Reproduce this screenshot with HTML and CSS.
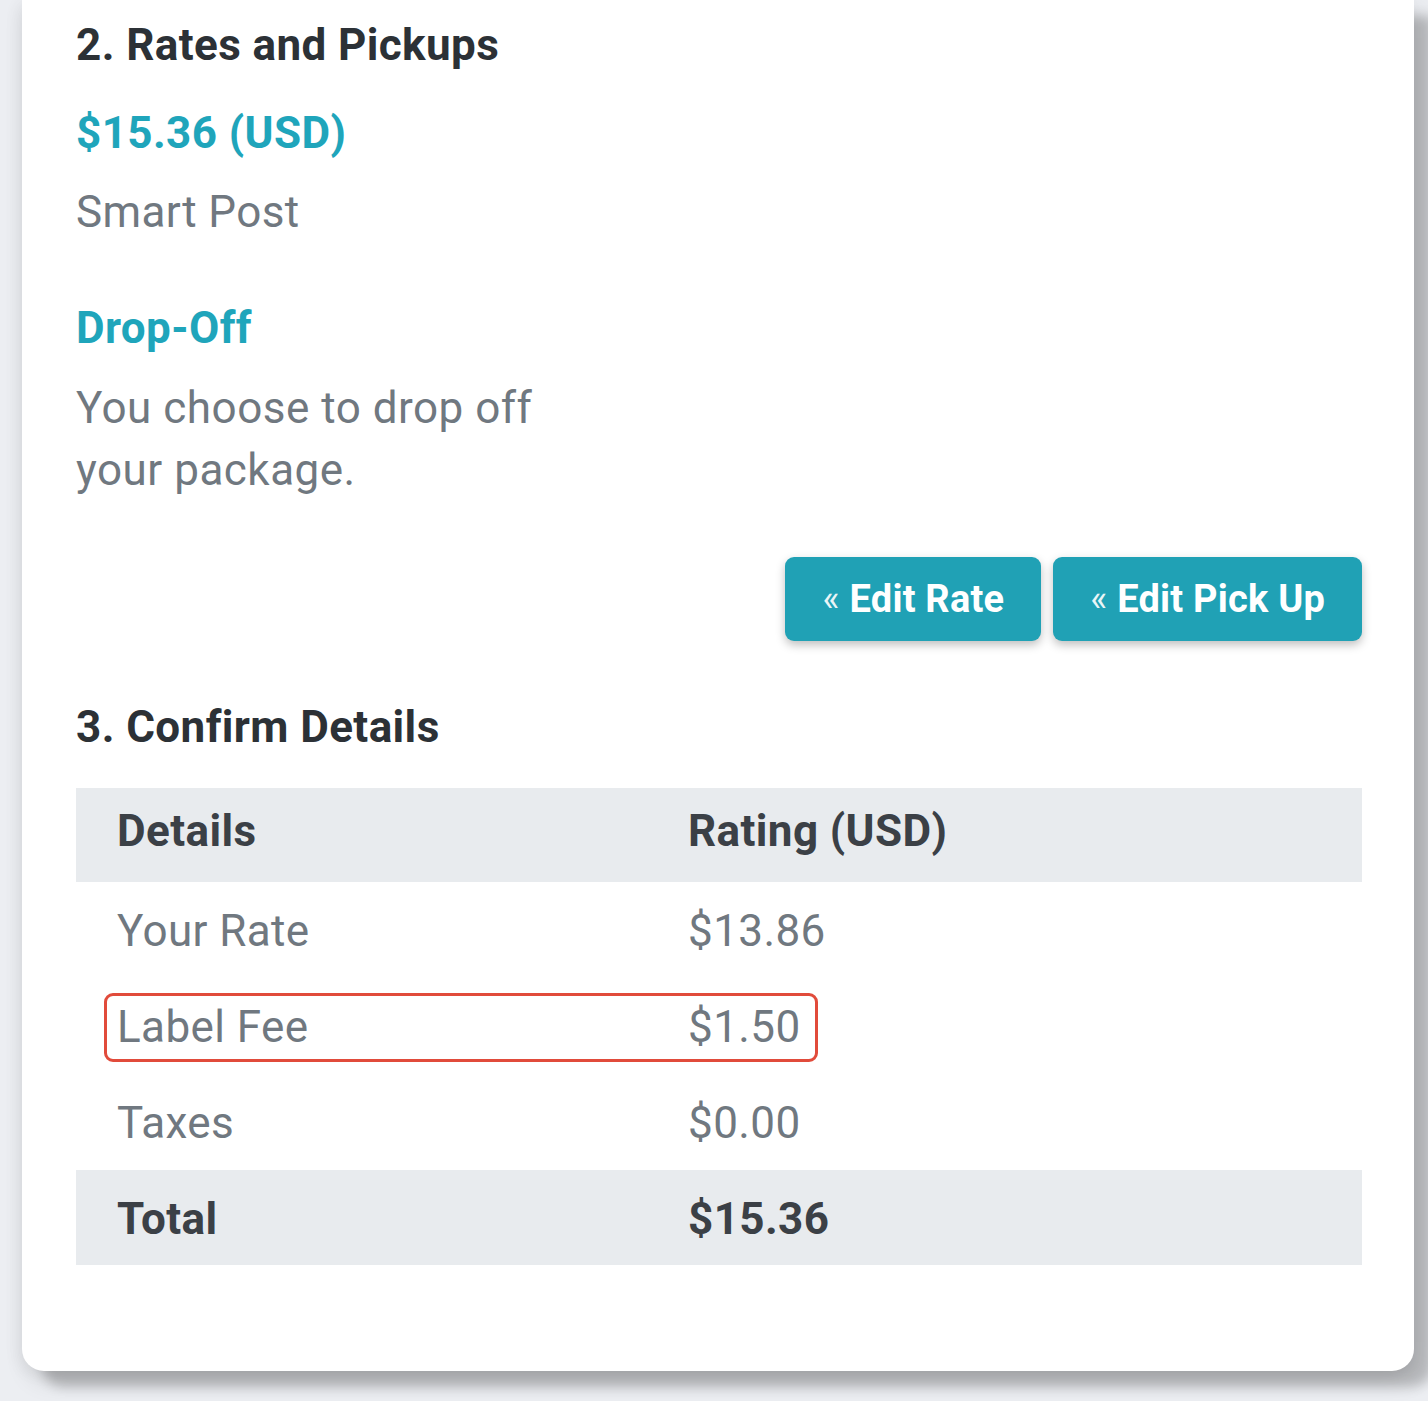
FILE: index.html
```html
<!DOCTYPE html>
<html lang="en">
<head>
<meta charset="utf-8">
<title>Shipping Summary</title>
<link rel="stylesheet" href="styles.css">
</head>
<body>
<div class="card">
  <h2 class="section-title">2. Rates and Pickups</h2>
  <div class="price">$15.36 (USD)</div>
  <p class="muted service">Smart Post</p>
  <div class="pickup-title">Drop-Off</div>
  <p class="muted pickup-desc">You choose to drop off your package.</p>
  <div class="actions">
    <button class="btn"><span class="chev">«</span><span>Edit Rate</span></button>
    <button class="btn"><span class="chev">«</span><span>Edit Pick Up</span></button>
  </div>
  <h2 class="section-title confirm">3. Confirm Details</h2>
  <div class="table-wrap">
    <table class="details">
      <colgroup>
        <col class="col-label">
        <col>
      </colgroup>
      <thead>
        <tr><th>Details</th><th>Rating (USD)</th></tr>
      </thead>
      <tbody>
        <tr><td>Your Rate</td><td>$13.86</td></tr>
        <tr><td>Label Fee</td><td>$1.50</td></tr>
        <tr><td>Taxes</td><td>$0.00</td></tr>
        <tr class="total"><td>Total</td><td>$15.36</td></tr>
      </tbody>
    </table>
    <div class="highlight"></div>
  </div>
</div>
</body>
</html>
```

FILE: styles.css
```css
html, body {
  margin: 0;
  padding: 0;
}
body {
  background: #eceef2;
  font-family: Roboto, "Liberation Sans", Arial, sans-serif;
  font-size: 44px;
  line-height: 62px;
  letter-spacing: 0.4px;
  color: #707880;
  height: 1401px;
  overflow: hidden;
}
.card {
  margin-left: 22px;
  width: 1392px;
  box-sizing: border-box;
  background: #fff;
  border-radius: 0 0 22px 22px;
  padding: 14px 52px 106px 54px;
  box-shadow: 20px 16px 12px rgba(0, 0, 0, 0.2), 6px 10px 24px rgba(0, 0, 0, 0.12), -4px 4px 16px rgba(0, 0, 0, 0.05);
}
.section-title {
  margin: 0;
  font-size: 44px;
  line-height: 62px;
  font-weight: 700;
  letter-spacing: 0.4px;
  color: #2c3136;
}
.price {
  margin-top: 26px;
  font-weight: 700;
  color: #1fa5bb;
}
.muted {
  margin: 0;
  color: #707880;
}
.service {
  margin-top: 17px;
}
.pickup-title {
  margin-top: 54px;
  font-weight: 700;
  color: #1fa5bb;
}
.pickup-desc {
  margin-top: 18px;
  max-width: 500px;
  letter-spacing: 0.5px;
}
.actions {
  margin-top: 56px;
  display: flex;
  justify-content: flex-end;
  gap: 12px;
}
.btn {
  height: 84px;
  padding: 0 37px;
  border: 0;
  border-radius: 9px;
  background: #20a1b5;
  color: #fff;
  font-family: Roboto, "Liberation Sans", Arial, sans-serif;
  font-size: 38px;
  font-weight: 700;
  letter-spacing: 0.2px;
  box-shadow: 0 4px 10px rgba(0, 0, 0, 0.25);
  display: flex;
  align-items: center;
}
.chev {
  font-size: 36px;
  font-weight: 400;
  margin-right: 10px;
  opacity: 0.9;
}
.confirm {
  margin-top: 55px;
}
.table-wrap {
  position: relative;
  margin-top: 30px;
}
.details {
  width: 100%;
  table-layout: fixed;
  border-collapse: collapse;
  font-size: 44px;
  line-height: 62px;
}
.col-label {
  width: 571px;
}
.details th,
.details td {
  text-align: left;
  padding: 0 41px;
  height: 96px;
  box-sizing: border-box;
}
.details th {
  background: #e8ebee;
  color: #3b4046;
  font-weight: 700;
  height: 94px;
  padding-bottom: 8px;
}
.details td {
  color: #707880;
  padding-top: 2px;
}
.details tr.total td {
  background: #e8ebee;
  color: #3b4046;
  font-weight: 700;
  height: 95px;
}
.highlight {
  position: absolute;
  top: 205px;
  left: 28px;
  width: 714px;
  height: 69px;
  box-sizing: border-box;
  border: 3px solid #e14b3b;
  border-radius: 9px;
}
```
